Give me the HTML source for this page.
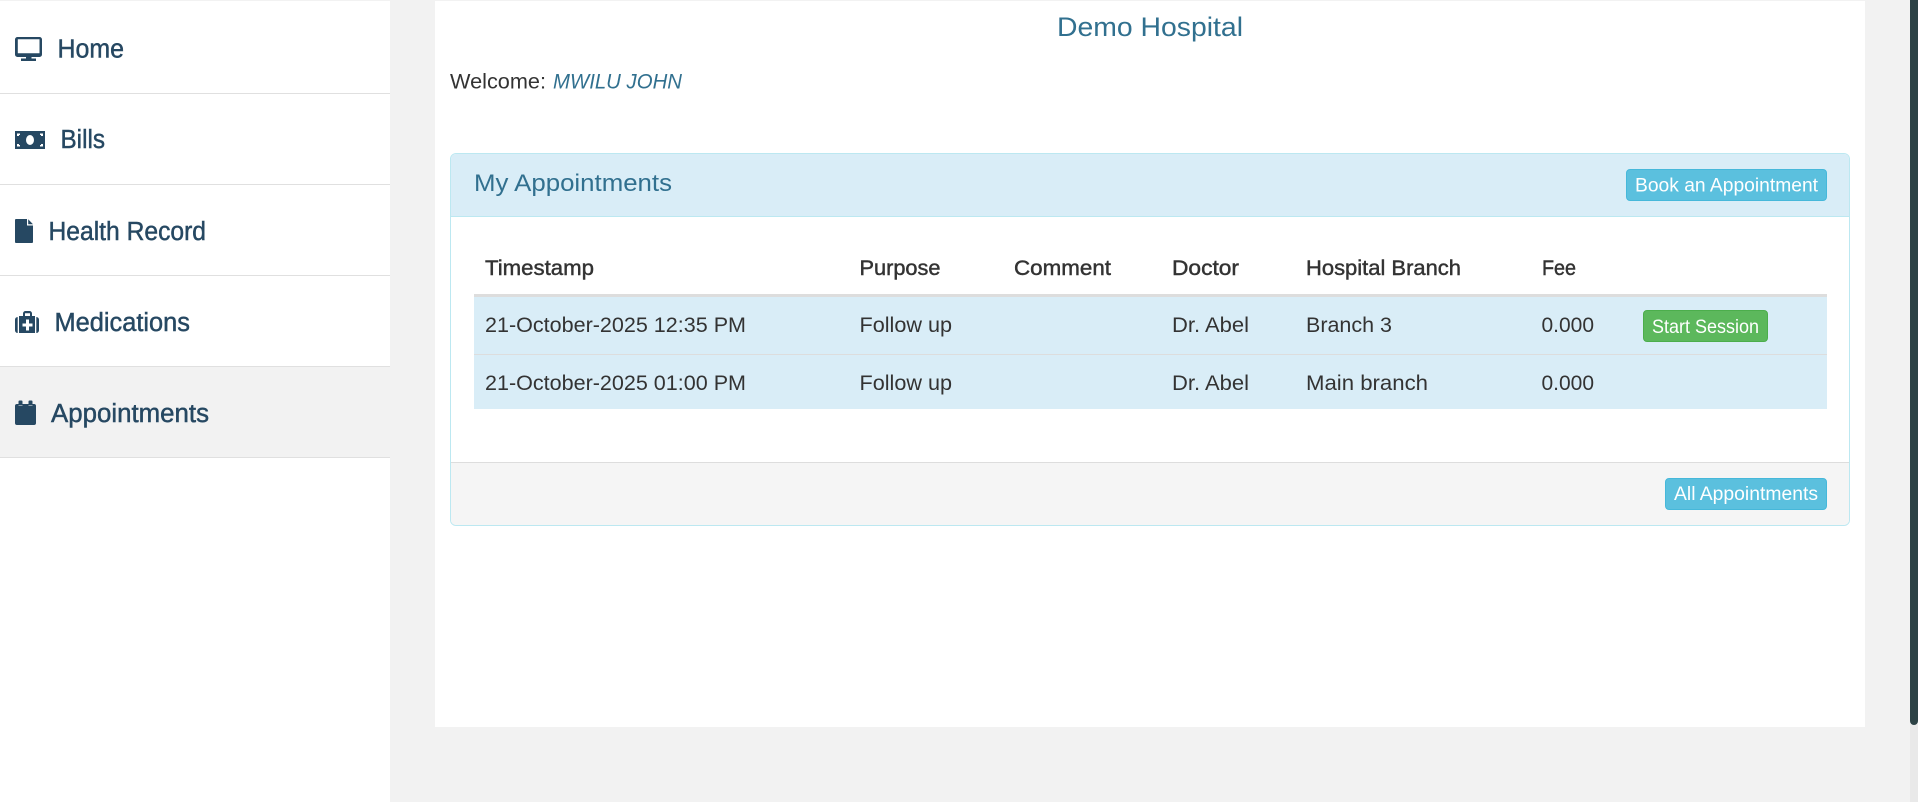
<!DOCTYPE html>
<html lang="en">
<head>
<meta charset="utf-8">
<title>Demo Hospital</title>
<style>
html,body{margin:0;padding:0;width:1918px;height:802px;overflow:hidden;background:#f2f2f2;font-family:"Liberation Sans",Arial,sans-serif}
div{position:absolute;box-sizing:border-box}
svg{position:absolute;left:0;top:0}
.nav{left:0;width:390px;border-bottom:1px solid #e0e0e0;background:#fff}
.btn{border-radius:4px;border:1px solid #46b8da;background:#5bc0de}
text{font-family:"Liberation Sans",Arial,sans-serif}
.n{font-size:25.5px;fill:#264862;stroke:#264862;stroke-width:.45px}
.h{font-size:21.5px;fill:#333;stroke:#333;stroke-width:.45px}
.c{font-size:21.5px;fill:#333}
.b{font-size:19.5px;fill:#fff}
</style>
</head>
<body>
<div style="left:0;top:1px;width:390px;height:801px;background:#fff"></div>
<div class="nav" style="top:1px;height:93px"></div>
<div class="nav" style="top:94px;height:91px"></div>
<div class="nav" style="top:185px;height:91px"></div>
<div class="nav" style="top:276px;height:91px"></div>
<div class="nav" style="top:367px;height:91px;background:#f2f2f2"></div>

<div style="left:435px;top:1px;width:1430px;height:726px;background:#fff"></div>

<div style="left:450px;top:153px;width:1400px;height:373px;border:1px solid #bce8f1;border-radius:6px;background:#fff"></div>
<div style="left:451px;top:154px;width:1398px;height:63px;background:#d9edf7;border-bottom:1px solid #bce8f1;border-radius:5px 5px 0 0"></div>
<div style="left:451px;top:462px;width:1398px;height:63px;background:#f5f5f5;border-top:1px solid #ddd;border-radius:0 0 5px 5px"></div>

<div style="left:474px;top:294px;width:1353px;height:3px;background:#ddd"></div>
<div style="left:474px;top:297px;width:1353px;height:112px;background:#d9edf7"></div>
<div style="left:474px;top:354px;width:1353px;height:1px;background:#ddd"></div>

<div class="btn" style="left:1626px;top:169px;width:201px;height:32px"></div>
<div class="btn" style="left:1665px;top:478px;width:162px;height:32px"></div>
<div class="btn" style="left:1643px;top:310px;width:125px;height:32px;background:#5cb85c;border-color:#4cae4c"></div>

<div style="left:1910px;top:0;width:8px;height:802px;background:#e9e9e9"></div>
<div style="left:1910px;top:0;width:8px;height:725px;background:#2c4245;border-radius:0 0 4px 4px"></div>

<svg width="1918" height="802" viewBox="0 0 1918 802" xmlns="http://www.w3.org/2000/svg">
  <!-- icons -->
  <g fill="#264862">
    <path fill-rule="evenodd" d="M17.500 37h22a2.500 2.500 0 0 1 2.500 2.500v15a2.500 2.500 0 0 1-2.500 2.500h-22a2.500 2.500 0 0 1-2.500-2.500v-15a2.500 2.500 0 0 1 2.500-2.500zM17.800 39.300v14h21.700v-14z"/>
    <path d="M26 57h5.500v1.500h-5.500zM21 58.500h15v2.500h-15z"/>
    <path fill-rule="evenodd" d="M15 131h30v18h-30zM30 135a4 5 0 1 0 0 10a4 5 0 1 0 0-10zM17 133.500v2.500h2v-1h1v-1.500zM40 133.500v1.500h1v1h2v-2.500zM17 144v2.500h3v-1.500h-1v-1zM41 144v1h-1v1.500h3v-2.500z"/>
    <path d="M16 219h11v6.500h6v16.500a1 1 0 0 1-1 1h-16a1 1 0 0 1-1-1v-22a1 1 0 0 1 1-1zM28.200 219.300l4.800 5h-4.800z"/>
    <path fill-rule="evenodd" d="M23 316v-2.500a2.500 2.500 0 0 1 2.500-2.500h4a2.500 2.500 0 0 1 2.500 2.500v2.500h3v17h-16v-17zM25 316h5v-2.800h-5zM26 319.500v4h-3.500v3h3.500v4h3v-4h3.500v-3h-3.500v-4z"/>
    <path d="M17.700 317v16a2.700 2.700 0 0 1-2.700-2.700v-10.600a2.700 2.700 0 0 1 2.700-2.700zM36.300 317a2.700 2.700 0 0 1 2.700 2.700v10.600a2.700 2.700 0 0 1-2.700 2.700z"/>
    <path d="M18.500 401.500a1 1 0 0 1 1-1h2a1 1 0 0 1 1 1v4h-4zM28.500 401.500a1 1 0 0 1 1-1h2a1 1 0 0 1 1 1v4h-4z"/>
    <path d="M17 404h1.500v2h4v-2h6v2h4v-2h1.500a2 2 0 0 1 2 2v17a2 2 0 0 1-2 2h-17a2 2 0 0 1-2-2v-17a2 2 0 0 1 2-2z"/>
  </g>

  <!-- sidebar -->
  <text class="n" x="57.500" y="57.500" textLength="66.500" lengthAdjust="spacingAndGlyphs">Home</text>
  <text class="n" x="60.500" y="148" textLength="44.500" lengthAdjust="spacingAndGlyphs">Bills</text>
  <text class="n" x="48.500" y="240" textLength="157.500" lengthAdjust="spacingAndGlyphs">Health Record</text>
  <text class="n" x="54.500" y="331" textLength="135.500" lengthAdjust="spacingAndGlyphs">Medications</text>
  <text class="n" x="51" y="422" textLength="158" lengthAdjust="spacingAndGlyphs">Appointments</text>

  <!-- header -->
  <text x="1057" y="36" font-size="27" fill="#31708f" textLength="186" lengthAdjust="spacingAndGlyphs">Demo Hospital</text>
  <text x="450" y="88.500" font-size="21.500" fill="#333" textLength="96" lengthAdjust="spacingAndGlyphs">Welcome:</text>
  <text x="553" y="88.500" font-size="21.500" font-style="italic" fill="#31708f" textLength="129" lengthAdjust="spacingAndGlyphs">MWILU JOHN</text>
  <text x="474" y="191" font-size="24.500" fill="#31708f" textLength="198" lengthAdjust="spacingAndGlyphs">My Appointments</text>

  <!-- buttons -->
  <text class="b" x="1635" y="191.500" textLength="183" lengthAdjust="spacingAndGlyphs">Book an Appointment</text>
  <text class="b" x="1674" y="500" textLength="144" lengthAdjust="spacingAndGlyphs">All Appointments</text>
  <text class="b" x="1652" y="333" textLength="107" lengthAdjust="spacingAndGlyphs">Start Session</text>

  <!-- table head -->
  <text class="h" x="485" y="275" textLength="109" lengthAdjust="spacingAndGlyphs">Timestamp</text>
  <text class="h" x="859.500" y="275" textLength="81" lengthAdjust="spacingAndGlyphs">Purpose</text>
  <text class="h" x="1014" y="275" textLength="97" lengthAdjust="spacingAndGlyphs">Comment</text>
  <text class="h" x="1172" y="275" textLength="67" lengthAdjust="spacingAndGlyphs">Doctor</text>
  <text class="h" x="1306" y="275" textLength="155" lengthAdjust="spacingAndGlyphs">Hospital Branch</text>
  <text class="h" x="1542" y="275" textLength="34" lengthAdjust="spacingAndGlyphs">Fee</text>

  <!-- rows -->
  <text class="c" x="485" y="332" textLength="261" lengthAdjust="spacingAndGlyphs">21-October-2025 12:35 PM</text>
  <text class="c" x="859.500" y="332" textLength="92.500" lengthAdjust="spacingAndGlyphs">Follow up</text>
  <text class="c" x="1172" y="332" textLength="77" lengthAdjust="spacingAndGlyphs">Dr. Abel</text>
  <text class="c" x="1306" y="332" textLength="86" lengthAdjust="spacingAndGlyphs">Branch 3</text>
  <text class="c" x="1541.500" y="332" textLength="52.500" lengthAdjust="spacingAndGlyphs">0.000</text>

  <text class="c" x="485" y="390" textLength="261" lengthAdjust="spacingAndGlyphs">21-October-2025 01:00 PM</text>
  <text class="c" x="859.500" y="390" textLength="92.500" lengthAdjust="spacingAndGlyphs">Follow up</text>
  <text class="c" x="1172" y="390" textLength="77" lengthAdjust="spacingAndGlyphs">Dr. Abel</text>
  <text class="c" x="1306" y="390" textLength="122" lengthAdjust="spacingAndGlyphs">Main branch</text>
  <text class="c" x="1541.500" y="390" textLength="52.500" lengthAdjust="spacingAndGlyphs">0.000</text>
</svg>
</body>
</html>
